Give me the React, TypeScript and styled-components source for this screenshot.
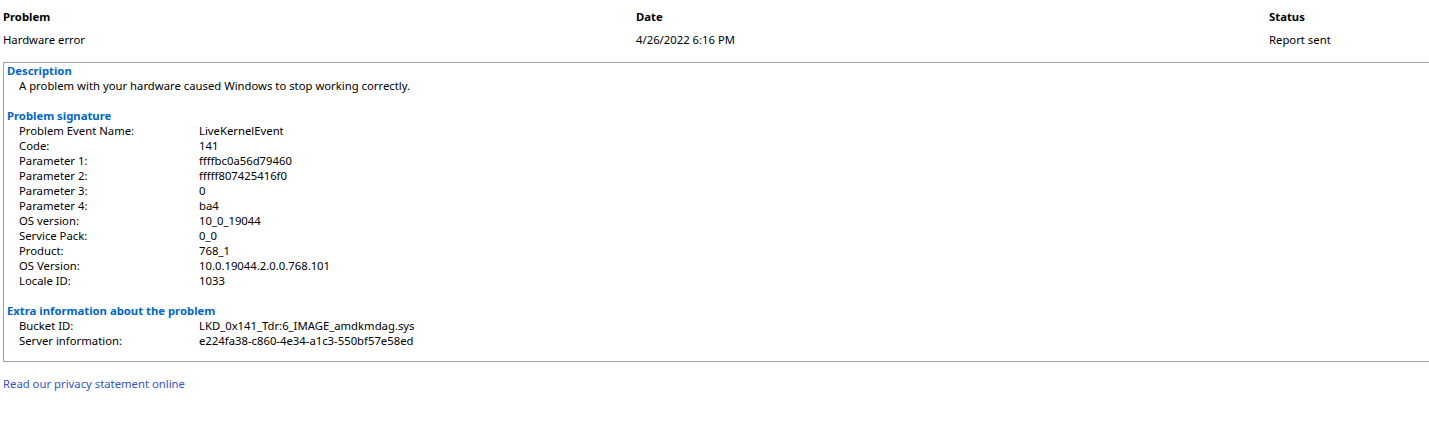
import React from "react";
import styled, { createGlobalStyle } from "styled-components";

const GlobalStyle = createGlobalStyle`
    html, body {
        margin: 0;
        padding: 0;
        background: #ffffff;
    }
    body {
        font-family: "Noto Sans", "Liberation Sans", sans-serif;
        font-size: 11.3px;
        line-height: 15px;
        color: #000000;
        overflow: hidden;
    }
`;

const Page = styled.div`
    width: 1429px;
    height: 441px;
    padding-top: 9px;
    box-sizing: border-box;
`;

const SummaryGrid = styled.div`
    display: grid;
    grid-template-columns: 633px 633px 1fr;
    row-gap: 8px;
    padding-left: 3px;
`;

const SummaryHead = styled.div`
    font-weight: bold;
`;

const SummaryCell = styled.div``;

const DetailBox = styled.div`
    margin: 15px 0 0 3px;
    border: 1px solid #a0a0a0;
    border-right: none;
    padding: 0 0 13px 0;
`;

const Section = styled.div<{ $first?: boolean }>`
    margin-top: ${(p) => (p.$first ? "0" : "15px")};
`;

const SectionTitle = styled.div`
    color: #0066cc;
    font-weight: bold;
    padding-left: 3px;
`;

const Paragraph = styled.div`
    padding-left: 15px;
`;

const InfoRow = styled.div`
    display: grid;
    grid-template-columns: 180px 1fr;
    padding-left: 15px;
`;

const PrivacyLink = styled.a`
    display: inline-block;
    margin: 14px 0 0 3px;
    color: #3355cc;
    text-decoration: none;
    cursor: pointer;
`;

const signature: [string, string][] = [
    ["Problem Event Name:", "LiveKernelEvent"],
    ["Code:", "141"],
    ["Parameter 1:", "ffffbc0a56d79460"],
    ["Parameter 2:", "fffff807425416f0"],
    ["Parameter 3:", "0"],
    ["Parameter 4:", "ba4"],
    ["OS version:", "10_0_19044"],
    ["Service Pack:", "0_0"],
    ["Product:", "768_1"],
    ["OS Version:", "10.0.19044.2.0.0.768.101"],
    ["Locale ID:", "1033"],
];

const extra: [string, string][] = [
    ["Bucket ID:", "LKD_0x141_Tdr:6_IMAGE_amdkmdag.sys"],
    ["Server information:", "e224fa38-c860-4e34-a1c3-550bf57e58ed"],
];

const App: React.FC = () => {
    return (
        <Page>
            <GlobalStyle />
            <SummaryGrid>
                <SummaryHead>Problem</SummaryHead>
                <SummaryHead>Date</SummaryHead>
                <SummaryHead>Status</SummaryHead>
                <SummaryCell>Hardware error</SummaryCell>
                <SummaryCell>4/26/2022 6:16 PM</SummaryCell>
                <SummaryCell>Report sent</SummaryCell>
            </SummaryGrid>

            <DetailBox>
                <Section $first>
                    <SectionTitle>Description</SectionTitle>
                    <Paragraph>A problem with your hardware caused Windows to stop working correctly.</Paragraph>
                </Section>

                <Section>
                    <SectionTitle>Problem signature</SectionTitle>
                    {signature.map(([label, value]) => (
                        <InfoRow key={label}>
                            <span>{label}</span>
                            <span>{value}</span>
                        </InfoRow>
                    ))}
                </Section>

                <Section>
                    <SectionTitle>Extra information about the problem</SectionTitle>
                    {extra.map(([label, value]) => (
                        <InfoRow key={label}>
                            <span>{label}</span>
                            <span>{value}</span>
                        </InfoRow>
                    ))}
                </Section>
            </DetailBox>

            <PrivacyLink>Read our privacy statement online</PrivacyLink>
        </Page>
    );
};

export default App;
